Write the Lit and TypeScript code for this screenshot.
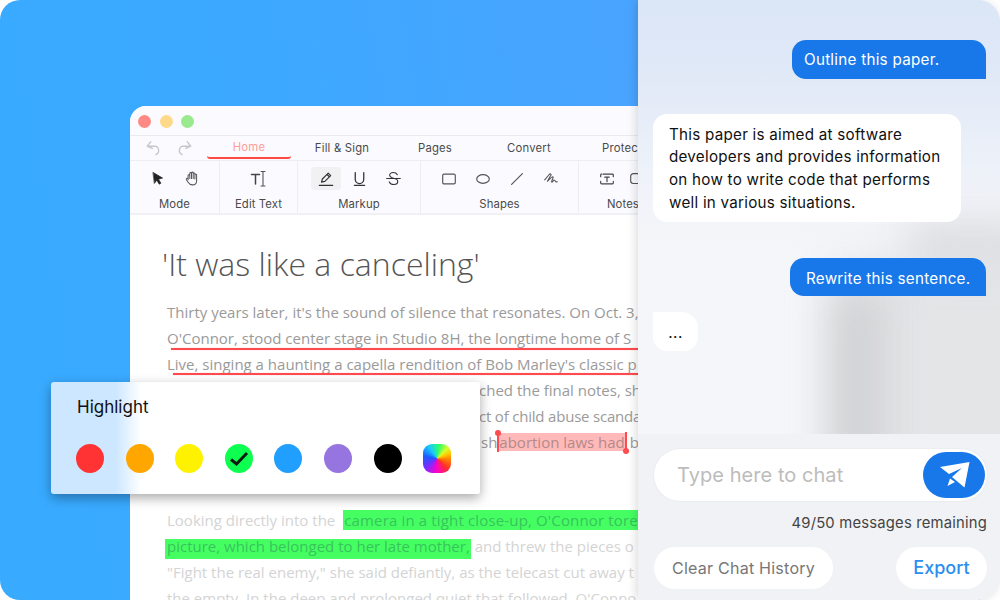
import { LitElement, html, css, svg } from "lit";
import { customElement } from "lit/decorators.js";

const ic = (body: unknown, w = 20) => html`<svg width=${w} height=${w} viewBox="0 0 20 20" fill="none" stroke="#444" stroke-width="1.3" stroke-linecap="round" stroke-linejoin="round">${body}</svg>`;

const colors = ["#ff3333", "#ffa600", "#fff200", "#0dff4f", "#209fff", "#9775e0", "#000000"];

@customElement("app-root")
export class AppRoot extends LitElement {
  static styles = css`
    :host { display: block; width: 1000px; height: 600px; font-family: Inter, "Liberation Sans", sans-serif; }
    * { box-sizing: border-box; }
    .stage { position: relative; width: 1000px; height: 600px; overflow: hidden; background: #fff; }
    .bg { position: absolute; inset: 0 20px 0 0; border-radius: 20px 0 0 20px; background: linear-gradient(80deg, #38abff 0%, #3aa9ff 25%, #54a0ff 100%); }

    .window { position: absolute; left: 130px; top: 106px; width: 510px; height: 494px; background: #fff; border-radius: 16px 0 0 0; overflow: hidden; display: flex; flex-direction: column; }
    .title { height: 30px; flex: none; background: #fbfbff; display: flex; align-items: center; gap: 8.500px; padding: 1px 0 0 8px; border-bottom: 1px solid #e9ebee; }
    .dot { width: 13px; height: 13px; border-radius: 50%; }
    .tabs { height: 25px; flex: none; background: #fbfbff; display: flex; align-items: flex-start; border-bottom: 1px solid #eceef1; font-size: 11.300px; color: #4a4a4a; letter-spacing: 0.2px; }
    .hist { width: 77px; height: 22px; display: flex; gap: 12px; padding: 2px 0 0 15px; align-items: center; flex: none; }
    .tab { display: flex; align-items: center; justify-content: center; flex: none; height: 23px; padding-top: 0; }
    .tab.home { width: 84px; height: 23px; color: #ff9d98; border-bottom: 2px solid #ff4a44; border-radius: 0 0 3px 3px; padding-top: 1px; }
    .tab.w1 { width: 102px; }
    .tab.w2 { width: 84px; }
    .tab.w3 { width: 104px; }
    .tab.w4 { width: 60px; justify-content: flex-start; padding-left: 21px; }
    .tools { height: 54px; flex: none; background: #fbfbff; display: flex; border-bottom: 2px solid #eff1f4; font-size: 11.300px; color: #4a4a4a; letter-spacing: 0.1px; }
    .group { flex: none; display: flex; flex-direction: column; align-items: center; border-right: 1px solid #eceef1; }
    .g1 { width: 90px; }
    .g2 { width: 78px; }
    .g3 { width: 123px; }
    .g4 { width: 158px; }
    .g5 { width: 61px; border-right: 0; align-items: flex-start; padding-left: 11px; }
    .icons { height: 34px; display: flex; align-items: center; padding-top: 1px; }
    .slot { width: 34px; height: 23px; display: flex; align-items: center; justify-content: center; border-radius: 4px; flex: none; }
    .slot.on { width: 30px; background: #f1f0f3; margin-left: 3px; }
    .slot.tight { margin-left: -4px; }
    .slot.after { margin-left: 2px; }
    .glabel { margin-top: 2px; line-height: 14px; }
    .g5 .glabel { margin-left: 17px; }

    .doc { flex: 1; padding: 27px 0 0 32px; font-family: "Open Sans", sans-serif; white-space: nowrap; overflow: hidden; }
    h1 { margin: 0; font-size: 32px; line-height: 44px; font-weight: 300; color: #555; }
    .para { margin: 13px 0 0 5px; font-size: 15px; line-height: 26px; color: #9a9a9a; }
    .para.faded { margin-top: 52px; color: #d4d4d4; }
    .under { position: relative; display: inline-block; line-height: 19px; }
    .under::after { content: ""; position: absolute; right: -10px; height: 2px; background: #ff4b4f; box-shadow: 0 0 1px #ff8a8c; }
    .u1::after { left: 4px; top: 19px; }
    .u2::after { left: 6px; top: 18px; }
    .hide { display: inline-block; }
    .h1 { width: 312px; }
    .h2 { width: 314px; }
    .snug { letter-spacing: -.2px; }
    .pink { position: relative; display: inline-block; background: #ffb9b9; color: #b28a8a; line-height: 18px; margin-left: 1px; padding: 0 1px; }
    .green { color: #37c45c; }
    .green.first { background: #45ff62; margin-left: 8px; letter-spacing: .15px; padding: 0 3px 0 1px; }
    .green.second { background: linear-gradient(#45ff62, #45ff62) 0 3px / 100% 20px no-repeat; margin-left: -2px; padding: 0 1px 3px 2px; }
    .handle { position: absolute; width: 2px; height: 18px; background: #ff4b4f; top: 0; }
    .handle::after { content: ""; position: absolute; left: -2px; width: 6px; height: 6px; border-radius: 50%; background: #ff4b4f; }
    .handle.a { left: -1px; top: 1px; }
    .handle.a::after { top: -4px; }
    .handle.b { right: -1px; top: -1px; }
    .handle.b::after { bottom: -4px; }

    .popup { position: absolute; left: 51px; top: 382px; width: 429px; height: 112px; border-radius: 3px; overflow: hidden; padding: 16px 0 0 26px; box-shadow: 0 4px 12px rgba(0,0,0,.34);
      background: linear-gradient(90deg, #cce7ff 0%, #cce7ff 15%, #fff 21%, #fff 100%); }
    .popup-title { font-size: 17px; line-height: 19px; color: #111; }
    .swatches { display: flex; gap: 21.600px; margin: 27px 0 0 -1px; }
    .sw { width: 28px; height: 29px; border-radius: 50%; display: flex; align-items: center; justify-content: center; flex: none; }
    .sw.rainbow { border-radius: 9px; background: conic-gradient(from 90deg, #ff8a00, #ff2d2d 45deg, #ff00c8 90deg, #7a2cff 140deg, #1a5cff 190deg, #19c9ff 235deg, #2dff6a 280deg, #d8ff2a 315deg, #ffc400 340deg, #ff8a00); }

    .chat { position: absolute; left: 638px; top: 0; width: 362px; height: 600px; border-radius: 0 22px 22px 0; overflow: hidden; display: flex; flex-direction: column; background: #f1f2f5; box-shadow: -2px 0 10px rgba(0,0,0,.14); }
    .msgs { height: 434px; flex: none; position: relative; overflow: hidden; padding: 40px 14px 0 15px; display: flex; flex-direction: column; background: linear-gradient(180deg, #dbe6f7 0%, #dfe8f7 60px, #f0f3f9 190px, #f5f6f9 260px); }
    .blotch { position: absolute; filter: blur(20px); }
    .b1 { left: 195px; top: 262px; width: 220px; height: 220px; background: #e4e5e7; }
    .b2 { left: 195px; top: 290px; width: 50px; height: 190px; background: #cfd0d2; }
    .b3 { left: 270px; top: 222px; width: 130px; height: 50px; background: #dbdce0; }
    .m { position: relative; font-size: 15.200px; flex: none; }
    .me { align-self: flex-end; background: #1878ea; color: #fff; border-radius: 14px 14px 0 14px; height: 39px; line-height: 40px; width: 194px; padding: 0 12px; letter-spacing: .27px; white-space: nowrap; }
    .bot { align-self: flex-start; background: #fff; color: #111; border-radius: 14px; width: 308px; height: 108px; margin-top: 35px; padding: 9.500px 16px; line-height: 22.900px; letter-spacing: .25px; }
    .me.two { margin-top: 36px; height: 38px; line-height: 41px; width: 196px; padding: 0 16px; }
    .typing { align-self: flex-start; background: #fff; color: #111; width: 45px; height: 39px; border-radius: 0 16px 14px 14px; margin-top: 16px; line-height: 42px; text-align: center; letter-spacing: .5px; }
    .foot { flex: 1; padding: 15px 13px 0 16px; display: flex; flex-direction: column; }
    .input { height: 52px; background: #fff; border-radius: 26px; display: flex; align-items: center; justify-content: space-between; padding: 0 2px 0 23px; font-size: 20px; color: #bcbcbc; box-shadow: 0 0 2px rgba(0,0,0,.08); letter-spacing: .05px; }
    .send { width: 62px; height: 46px; border-radius: 23px; background: #1878ea; display: flex; align-items: center; justify-content: center; padding: 0 0 0 2px; }
    .count { margin-top: 13px; text-align: right; font-size: 14.800px; line-height: 18px; color: #444; letter-spacing: .2px; }
    .btns { margin-top: 15px; display: flex; justify-content: space-between; }
    .btn { height: 42px; border-radius: 21px; background: #fff; display: flex; align-items: center; justify-content: center; padding-bottom: 1px; }
    .clear { width: 179px; color: #777; font-size: 16.100px; letter-spacing: .2px; }
    .export { width: 91px; color: #2b8ff0; font-size: 18px; font-weight: 500; }
  `;

  render() {
    return html`<div class="stage">
      <div class="bg"></div>
      <div class="window">
        <div class="title">
          <span class="dot" style="background:#ff8a85"></span>
          <span class="dot" style="background:#ffd98a"></span>
          <span class="dot" style="background:#9be98f"></span>
        </div>
        <div class="tabs">
          <div class="hist">
            ${ic(svg`<path d="M6.500 3 2.500 8 8 10.500M3 8h7.500a4.800 4.800 0 0 1 1.500 9.300" stroke="#c6c6c6" stroke-width="1.500"/>`, 18)}
            ${ic(svg`<path d="M13.500 3l4 5L12 10.500M17 8H9.500a4.800 4.800 0 0 0-1.500 9.300" stroke="#c6c6c6" stroke-width="1.500"/>`, 18)}
          </div>
          <div class="tab home">Home</div>
          <div class="tab w1">Fill &amp; Sign</div>
          <div class="tab w2">Pages</div>
          <div class="tab w3">Convert</div>
          <div class="tab w4">Protec</div>
        </div>
        <div class="tools">
          <div class="group g1">
            <div class="icons">
              <span class="slot">${ic(svg`<path d="M5 3l11 6.500-4.800 1.300 2.800 4.700-2 1.200-2.800-4.700L6.500 15.500z" fill="#222" stroke="#222" stroke-width=".8"/>`, 17)}</span>
              <span class="slot">${ic(svg`<path d="M6 11.500V6.500a1 1 0 0 1 2 0V4a1 1 0 0 1 2 0v-.5a1 1 0 0 1 2 0V4.500a1 1 0 0 1 2 0V6a1 1 0 0 1 2 0v6.500c0 3-2 5-5 5-2.500 0-3.800-1-5-3l-2-3c-.6-1.200 1-2.200 2-1.500zM8 6.500V10M10 4v6M12 4.500V10M14 6v4.500" stroke="#555" stroke-width="1.200"/>`, 17)}</span>
            </div>
            <div class="glabel">Mode</div>
          </div>
          <div class="group g2">
            <div class="icons">
              <span class="slot">${ic(svg`<path d="M2.500 5.500h8M6.500 5.500V15" stroke="#444" stroke-width="1.500"/><path d="M12 2.500h4M14 2.500V17M12 17h4" stroke="#555" stroke-width="1.100"/>`, 20)}</span>
            </div>
            <div class="glabel">Edit Text</div>
          </div>
          <div class="group g3">
            <div class="icons">
              <span class="slot on">${ic(svg`<path d="M5 13.500l1-3.500 6.500-6.500 2.700 2.700-6.500 6.500zM11.200 5l2.500 2.500" stroke="#333"/><path d="M2.500 17h15" stroke="#333"/>`, 18)}</span>
              <span class="slot after">${ic(svg`<path d="M5 3v8a5 5 0 0 0 10 0V3M4 18h12" stroke="#333" stroke-width="1.500"/>`, 17)}</span>
              <span class="slot">${ic(svg`<path d="M14.500 5.500C13.500 3.500 11.500 3 9.500 3 7 3 5.500 4.500 5.500 6.300 5.500 11 15 8.500 15 13.500 15 15.800 13 17 10.500 17 8 17 6 16 5 14M2 10h16" stroke="#333" stroke-width="1.300"/>`, 17)}</span>
            </div>
            <div class="glabel">Markup</div>
          </div>
          <div class="group g4">
            <div class="icons">
              <span class="slot">${ic(svg`<rect x="3" y="4.500" width="14" height="11" rx="1.500" stroke="#555"/>`, 18)}</span>
              <span class="slot">${ic(svg`<ellipse cx="10" cy="10" rx="7" ry="4.800" stroke="#555"/>`, 18)}</span>
              <span class="slot">${ic(svg`<path d="M4 16 16 4" stroke="#555"/>`, 18)}</span>
              <span class="slot">${ic(svg`<path d="M3 11l5-6c1.500-1.500 3 0 1.500 1.500L6 12.500c1-1 5-5 6-5 1.500 0-2.500 6-1 6s1.500-3 3-2 1 2.500 3 1.500" stroke="#555" stroke-width="1.200"/>`, 18)}</span>
            </div>
            <div class="glabel">Shapes</div>
          </div>
          <div class="group g5">
            <div class="icons">
              <span class="slot">${ic(svg`<path d="M5.500 4.500H16a1 1 0 0 1 1 1v2M17 12.500v2a1 1 0 0 1-1 1H4a1 1 0 0 1-1-1v-2M3 7.500v-2a1 1 0 0 1 1-1M7.500 8h5M10 8v5" stroke="#444"/>`, 18)}</span>
              <span class="slot tight">${ic(svg`<rect x="3" y="4" width="14" height="11" rx="3" stroke="#555"/>`, 18)}</span>
            </div>
            <div class="glabel">Notes</div>
          </div>
        </div>
        <div class="doc">
          <h1>'It was like a canceling'</h1>
          <div class="para">
            Thirty years later, it's the sound of silence that resonates. On Oct. 3,<br />
            <span class="under u1">O'Connor, stood center stage in Studio 8H, the longtime home of S</span><br />
            <span class="under u2">Live, singing a haunting a capella rendition of Bob Marley's classic p</span><br />
            <span class="hide h1"></span>ched the final notes, sh<br />
            <span class="hide h1"></span><span class="snug">ct of child abuse scanda</span><br />
            <span class="hide h2"></span>sh<span class="pink"><span class="handle a"></span>abortion laws had<span class="handle b"></span></span> b
          </div>
          <div class="para faded">
            Looking directly into the<span class="green first">camera in a tight close-up, O'Connor tore</span><br />
            <span class="green second">picture, which belonged to her late mother,</span> and threw the pieces o<br />
            "Fight the real enemy," she said defiantly, as the telecast cut away t<br />
            the empty. In the deep and prolonged quiet that followed, O'Conno
          </div>
        </div>
      </div>

      <div class="popup">
        <div class="popup-title">Highlight</div>
        <div class="swatches">
          ${colors.map((c, i) => html`<span class="sw" style="background:${c}">${i === 3 ? html`<svg width="22" height="18" viewBox="0 0 22 18" fill="none" stroke="#0c1a10" stroke-width="3"><path d="M3 9.500 8.500 14 19 3"/></svg>` : ""}</span>`)}
          <span class="sw rainbow"></span>
        </div>
      </div>

      <div class="chat">
        <div class="msgs">
          <div class="blotch b1"></div>
          <div class="blotch b2"></div>
          <div class="blotch b3"></div>
          <div class="m me">Outline this paper.</div>
          <div class="m bot">This paper is aimed at software developers and provides information on how to write code that performs well in various situations.</div>
          <div class="m me two">Rewrite this sentence.</div>
          <div class="m typing">...</div>
        </div>
        <div class="foot">
          <div class="input">
            <span>Type here to chat</span>
            <span class="send"><svg width="30" height="26" viewBox="0 0 30 26"><path fill="#fff" d="M29.500 0 0 5l9 7 13-6-10 9 12.500 10.500z"/><path fill="#fff" d="M7.500 24 10 16.500l5 3.500z"/></svg></span>
          </div>
          <div class="count">49/50 messages remaining</div>
          <div class="btns">
            <div class="btn clear">Clear Chat History</div>
            <div class="btn export">Export</div>
          </div>
        </div>
      </div>
    </div>`;
  }
}
